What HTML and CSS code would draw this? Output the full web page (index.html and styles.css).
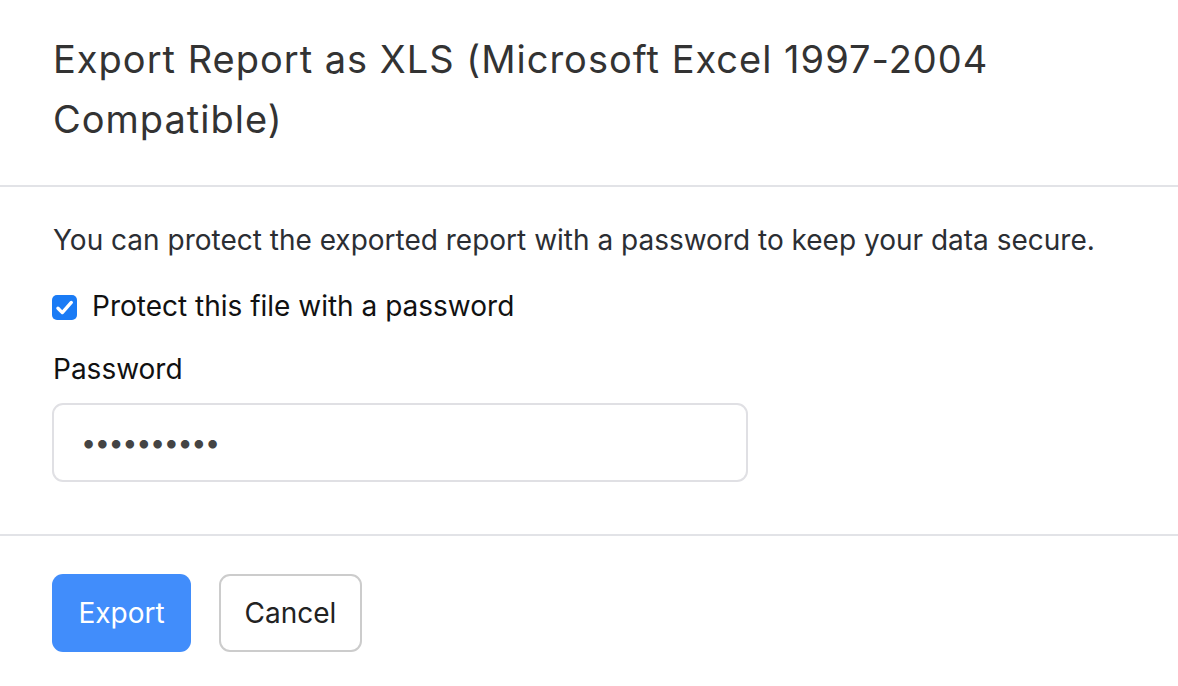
FILE: index.html
```html
<!DOCTYPE html>
<html lang="en">
<head>
<meta charset="utf-8">
<title>Export Report</title>
<link rel="stylesheet" href="styles.css">
</head>
<body>
<div class="dialog">
  <header class="dialog-header">
    <h1 class="dialog-title">Export Report as XLS (Microsoft Excel 1997-2004 Compatible)</h1>
  </header>
  <section class="dialog-body">
    <p class="intro">You can protect the exported report with a password to keep your data secure.</p>
    <label class="check-row">
      <span class="check-box">
        <svg viewBox="0 0 24 24" width="21" height="21" aria-hidden="true"><path d="M4.5 12.8l5 5L19.8 6.2" fill="none" stroke="#fff" stroke-width="3.8" stroke-linecap="round" stroke-linejoin="round"/></svg>
      </span>
      <span class="check-label">Protect this file with a password</span>
    </label>
    <div class="field">
      <div class="field-label">Password</div>
      <div class="input-box"><span class="dots">&bull;&bull;&bull;&bull;&bull;&bull;&bull;&bull;&bull;&bull;</span></div>
    </div>
  </section>
  <footer class="dialog-footer">
    <button class="btn btn-primary" type="button">Export</button>
    <button class="btn btn-secondary" type="button">Cancel</button>
  </footer>
</div>
</body>
</html>
```

FILE: styles.css
```css
html, body {
  margin: 0;
  padding: 0;
  background: #ffffff;
}
body {
  font-family: Inter, "Noto Sans", "Liberation Sans", sans-serif;
  color: #222;
}
.dialog {
  width: 1178px;
  height: 686px;
  display: flex;
  flex-direction: column;
}
.dialog-header {
  padding: 29px 52px 36px 53px;
  border-bottom: 2px solid #e2e3e7;
}
.dialog-title {
  margin: 0;
  font-size: 38px;
  line-height: 60px;
  font-weight: 400;
  letter-spacing: 1px;
  color: #333333;
  max-width: 1000px;
}
.dialog-body {
  padding: 35px 52px 52px 53px;
  border-bottom: 2px solid #e2e3e7;
}
.intro {
  margin: 0;
  font-size: 28px;
  line-height: 36px;
  color: #2b2e33;
}
.check-row {
  margin-top: 30px;
  display: flex;
  align-items: center;
  height: 36px;
  margin-left: -1px;
}
.check-box {
  width: 25px;
  height: 25px;
  border-radius: 5px;
  background: #1a7bf5;
  display: flex;
  align-items: center;
  justify-content: center;
  flex: none;
  margin-top: 2px;
}
.check-label {
  margin-left: 15px;
  font-size: 28px;
  line-height: 36px;
  color: #111111;
}
.field {
  margin-top: 27px;
}
.field-label {
  font-size: 28px;
  line-height: 36px;
  color: #111111;
}
.input-box {
  margin-top: 16px;
  margin-left: -1px;
  width: 696px;
  height: 79px;
  border: 2px solid #e0e0e4;
  border-radius: 11px;
  display: flex;
  align-items: center;
  padding-left: 27px;
  box-sizing: border-box;
}
.dots {
  font-size: 27px;
  letter-spacing: -1.4px;
  color: #444444;
  line-height: 1;
}
.dialog-footer {
  padding: 38px 52px 0 52px;
  display: flex;
  gap: 28px;
}
.btn {
  font-family: Inter, "Noto Sans", "Liberation Sans", sans-serif;
  font-size: 28px;
  height: 78px;
  border-radius: 11px;
  padding: 0;
  cursor: pointer;
}
.btn-primary {
  width: 139px;
  background: #418dfb;
  border: none;
  color: #ffffff;
}
.btn-secondary {
  width: 143px;
  background: #ffffff;
  border: 2px solid #cccccc;
  color: #222222;
}
```
